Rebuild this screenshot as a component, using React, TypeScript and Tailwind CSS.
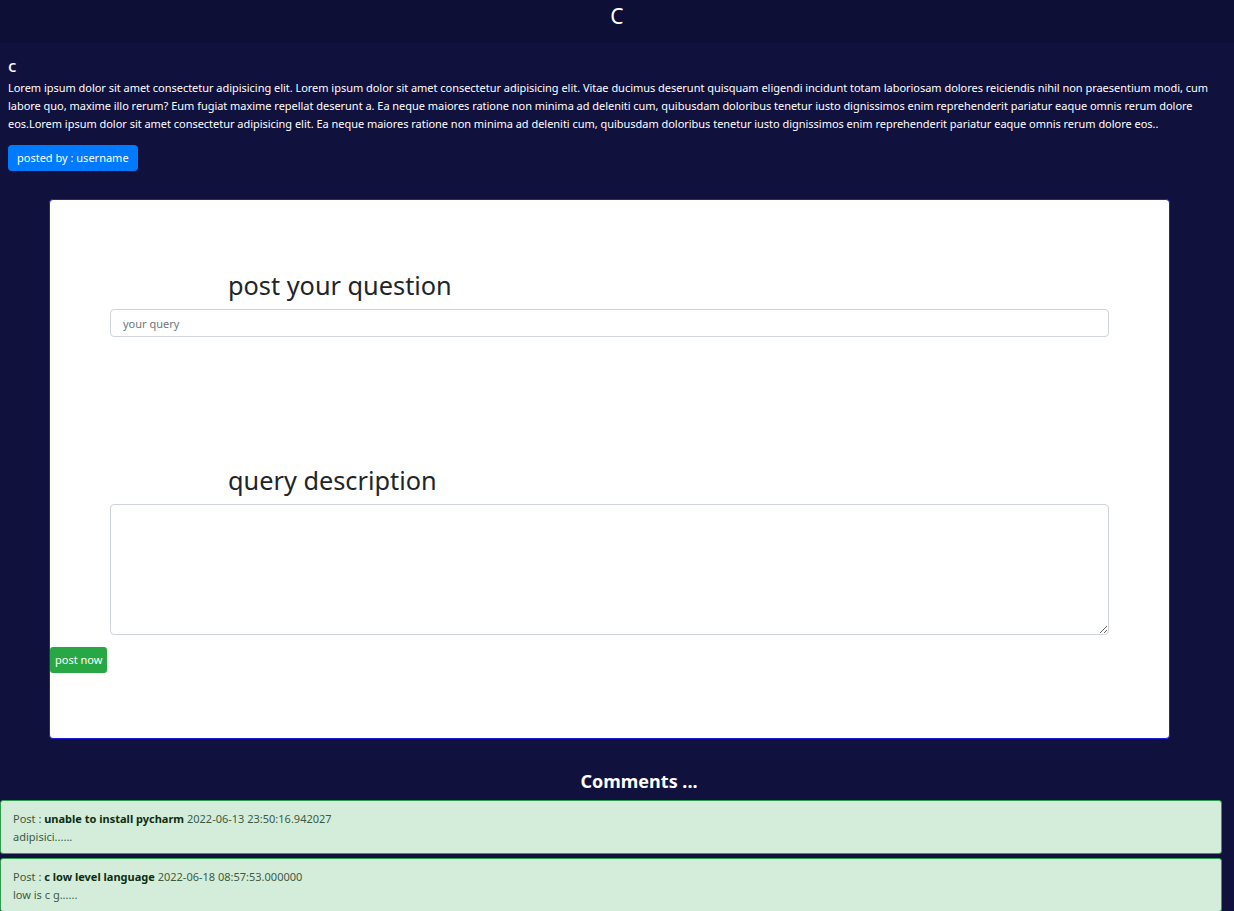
import React from "react";

const para =
  "Lorem ipsum dolor sit amet consectetur adipisicing elit. Lorem ipsum dolor sit amet consectetur adipisicing elit. Vitae ducimus deserunt quisquam eligendi incidunt totam laboriosam dolores reiciendis nihil non praesentium modi, cum labore quo, maxime illo rerum? Eum fugiat maxime repellat deserunt a. Ea neque maiores ratione non minima ad deleniti cum, quibusdam doloribus tenetur iusto dignissimos enim reprehenderit pariatur eaque omnis rerum dolore eos.Lorem ipsum dolor sit amet consectetur adipisicing elit. Ea neque maiores ratione non minima ad deleniti cum, quibusdam doloribus tenetur iusto dignissimos enim reprehenderit pariatur eaque omnis rerum dolore eos..";

const comments = [
  { title: "unable to install pycharm", date: "2022-06-13 23:50:16.942027", body: "adipisici......" },
  { title: "c low level language", date: "2022-06-18 08:57:53.000000", body: "low is c g......" },
];

export default function App() {
  return (
    <div
      className="min-h-[911px] bg-[#11113d] text-white"
      style={{ fontFamily: '"Noto Sans", "Open Sans", sans-serif' }}
    >
      <header className="h-[43px] bg-[#0e0f37] flex justify-center pt-[2px]">
        <span className="text-[21px] leading-[28px]">C</span>
      </header>

      <section className="px-2 pt-[13px]">
        <h2 className="text-[17px] font-medium leading-[20px]">c</h2>
        <p className="text-[11px] leading-[18px] mt-[3px] tracking-[-0.03px]">{para}</p>
        <button className="mt-[12px] h-[26px] px-[9px] rounded-[4px] bg-[#007bff] text-white text-[11px]">
          posted by : username
        </button>
      </section>

      <main className="mx-[49px] w-[1121px] mt-[28px] h-[540px] bg-white rounded-[4px] border border-[#1f1fd6] text-[#212529] pt-[67px]">
        <h3 className="pl-[178px] text-[25.3px] leading-[36px]">post your question</h3>
        <div className="px-[60px] mt-[6px]">
          <input
            placeholder="your query"
            className="w-full h-[28px] border border-[#ced4da] rounded-[4px] px-3 text-[11px] placeholder-[#6c757d] outline-none"
          />
        </div>
        <h3 className="pl-[178px] mt-[125px] text-[25.3px] leading-[36px]">query description</h3>
        <div className="px-[60px] mt-[6px]">
          <textarea className="block w-full h-[131px] border border-[#ced4da] rounded-[4px] px-3 text-[11px] outline-none" />
        </div>
        <button className="mt-[12px] h-[26px] px-[5px] rounded-[3px] bg-[#28a745] text-white text-[11px]">
          post now
        </button>
      </main>

      <h4 className="text-center font-bold text-[18px] leading-[24px] mt-[30px] pl-[44px]">Comments ...</h4>
      <div className="mt-[7px] flex flex-col gap-[4px] w-[1222px]">
        {comments.map((c) => (
          <div
            key={c.title}
            className="h-[54px] bg-[#d4edda] border border-[#2e9e4d] rounded-[3px] px-[12px] pt-[9px] text-[#3d5a44] text-[11px] leading-[18px]"
          >
            <div>
              Post : <b className="text-[#0b2e13]">{c.title}</b> {c.date}
            </div>
            <div>{c.body}</div>
          </div>
        ))}
      </div>
    </div>
  );
}
